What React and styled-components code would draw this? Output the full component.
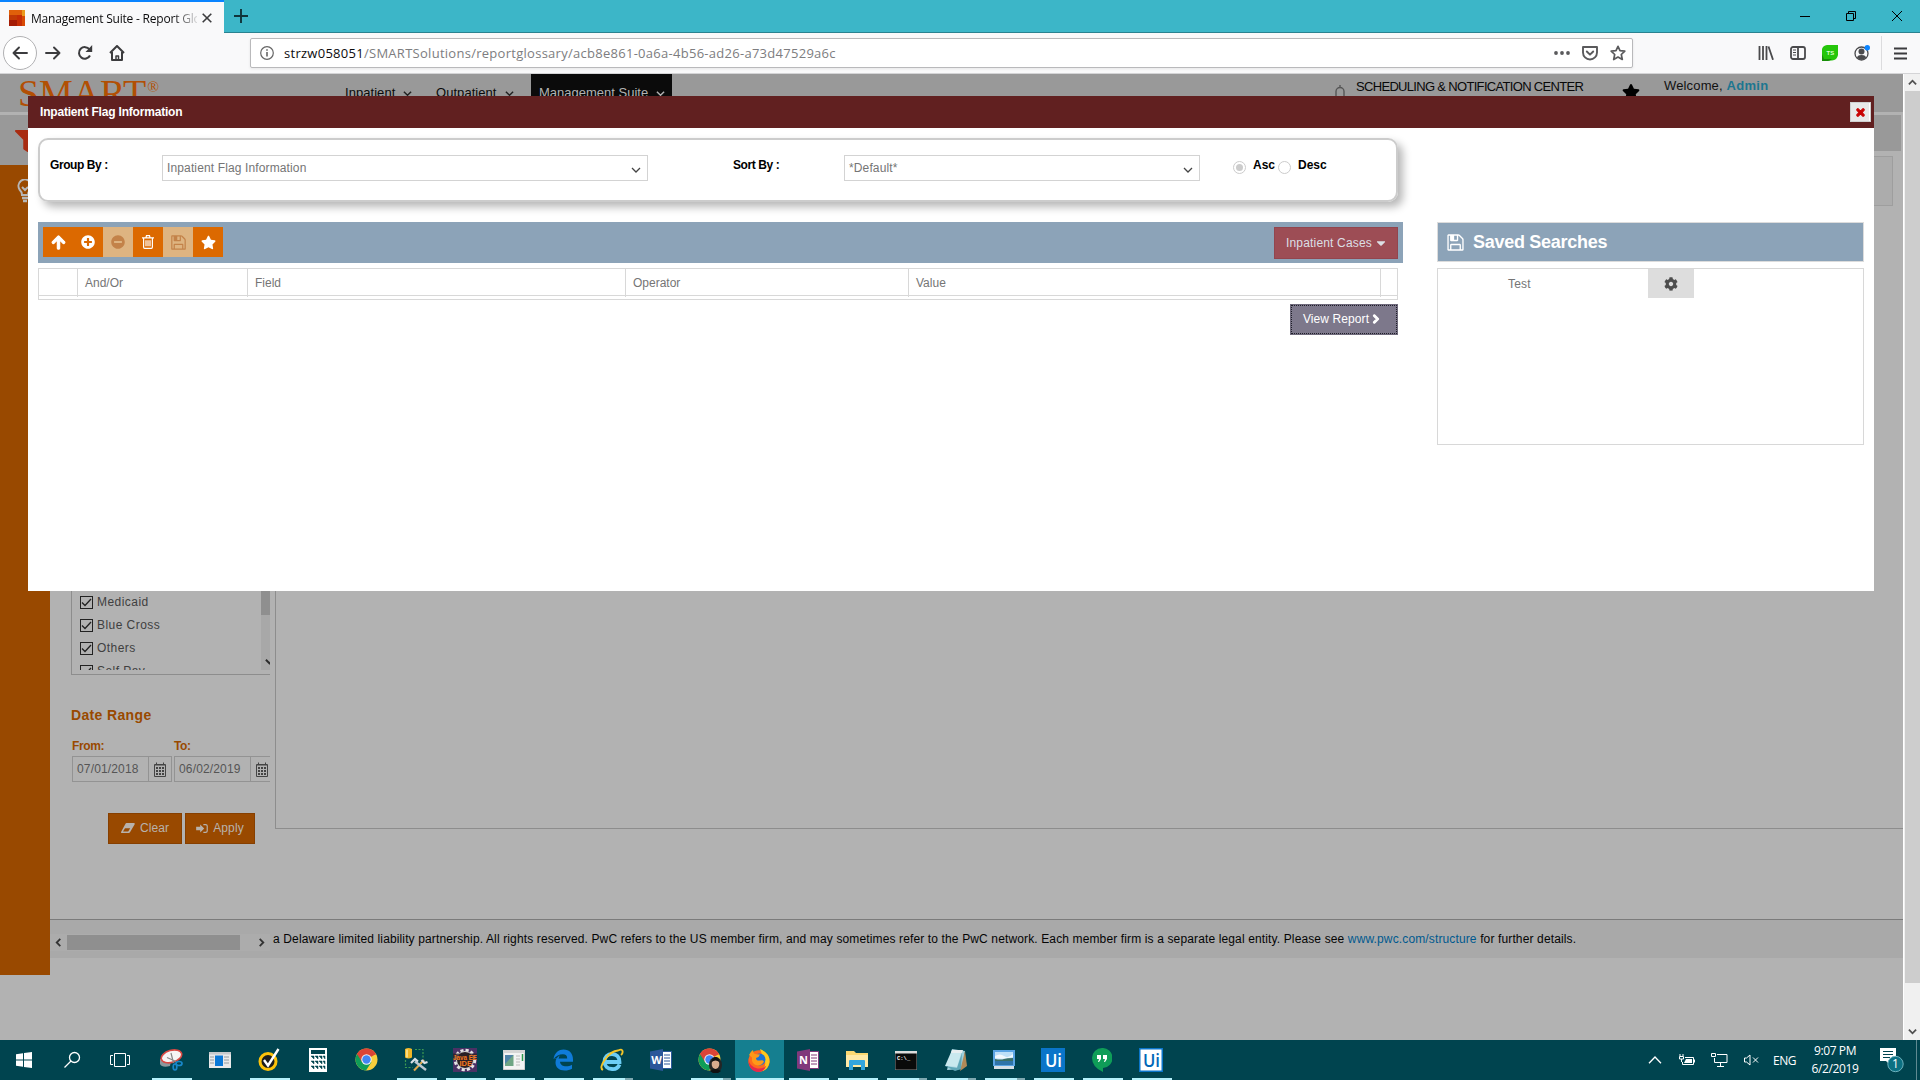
import React from "react";
import styled, { createGlobalStyle, css } from "styled-components";
import {
  FaArrowUp, FaPlusCircle, FaMinusCircle, FaStar, FaCog, FaChevronRight, FaFilter, FaTimes, FaCaretDown,
} from "react-icons/fa";

const ui = `"Open Sans", "Noto Sans", sans-serif`;
const arial = `"Liberation Sans", Arial, sans-serif`;

const Global = createGlobalStyle`
  *, *::before, *::after { box-sizing: border-box; }
  body { margin: 0; overflow: hidden; font-family: ${arial}; font-size: 12px; }
  svg { display: block; flex: none; }
`;

const Screen = styled.div`
  width: 1920px; height: 1080px; display: flex; flex-direction: column; overflow: hidden;
`;

/* ---------- browser chrome ---------- */
const TabBar = styled.div`
  height: 33px; flex: none; display: flex; background: #3cb6c8; border-bottom: 1px solid #2a8290;
`;
const Tab = styled.div`
  width: 224px; height: 33px; display: flex; align-items: center; background: #f9f9fa;
  border-top: 2px solid #0a84ff; padding: 1px 12px 0 9px; font-family: ${ui};
`;
const TabTitle = styled.div`
  width: 166px; margin: 0 5px 0 6px; overflow: hidden; white-space: nowrap; font-size: 12px; color: #0c0c0d;
  letter-spacing: -0.2px;
  mask-image: linear-gradient(to right, #000 142px, transparent 170px);
`;
const NewTab = styled.div`
  width: 34px; display: flex; align-items: center; justify-content: center;
`;
const Spacer = styled.div` flex: 1; `;
const WinButton = styled.div`
  width: 46px; display: flex; align-items: center; justify-content: center;
`;
const NavBar = styled.div`
  height: 41px; flex: none; display: flex; align-items: center; background: #f9f9fa;
  border-bottom: 1px solid #d4d4d6;
`;
const BackButton = styled.div`
  width: 34px; height: 34px; margin: 0 0 0 3px; border: 1px solid #b1b1b3; border-radius: 50%;
  background: #fff; display: flex; align-items: center; justify-content: center;
`;
const NavIcon = styled.div`
  width: 32px; display: flex; align-items: center; justify-content: center;
`;
const UrlBar = styled.div`
  width: 1383px; height: 30px; margin-left: 117px; background: #fff; border: 1px solid #b9b9bb;
  border-radius: 2px; box-shadow: 0 1px 3px rgba(0,0,0,.08); display: flex; align-items: center;
  padding: 0 0 0 9px;
`;
const Url = styled.div`
  flex: 1; margin-left: 10px; font-family: ${ui}; font-size: 13px; letter-spacing: 0.275px;
  color: #7d7d80; white-space: nowrap;
`;
const Host = styled.span` color: #0c0c0d; `;
const UrlIcon = styled.div` width: 28px; display: flex; justify-content: center; `;
const ToolIcons = styled.div`
  flex: 1; height: 40px; display: flex; align-items: center; padding-left: 117px;
`;
const MenuButton = styled.div`
  margin-left: 3px; height: 34px; border-left: 1px solid #dcdcde; width: 38px; display: flex;
  align-items: center; justify-content: center;
`;

/* ---------- page ---------- */
const Viewport = styled.div` height: 966px; flex: none; display: flex; `;
const Page = styled.div`
  position: relative; width: 1903px; height: 966px; overflow: hidden; background: #b2b2b2;
  display: flex; flex-direction: column;
`;
const Header = styled.div`
  height: 38px; flex: none; background: #999; display: flex; align-items: flex-start; padding-left: 18px;
`;
const Logo = styled.div`
  width: 319px; display: flex; margin-top: -2px; font-family: "Liberation Serif", serif; font-size: 38px;
  line-height: 42px; color: #b24f04; letter-spacing: -0.1px; white-space: nowrap;
`;
const LogoMark = styled.span` font-size: 15.5px; line-height: 20px; margin: 5px 0 0 1px; `;
const NavItem = styled.div`
  height: 38px; width: ${(p) => p.$w}px; padding: 10px 0 0 8px; display: flex; font-size: 13px; line-height: 18px;
  color: ${(p) => (p.$active ? "#b2b2b2" : "#0a0a0a")}; background: ${(p) => (p.$active ? "#0b0b0b" : "transparent")};
  letter-spacing: ${(p) => (p.$active ? 0 : 0.05)}px; white-space: nowrap;
  svg { margin: 5px 0 0 8px; }
`;
const Notice = styled.div`
  margin-left: 662px; width: 324px; display: flex; font-size: 13px; line-height: 18px; padding-top: 4px; color: #080808;
  white-space: nowrap; letter-spacing: -0.68px;
  svg { margin: 7px 10px 0 0; }
`;
const StarMark = styled.div` margin: 9px 0 0 -36px; width: 42px; color: #000; `;
const Welcome = styled.div`
  font-size: 13px; line-height: 18px; padding-top: 3px; color: #111; white-space: nowrap; letter-spacing: 0.15px;
  b { color: #1c7690; letter-spacing: 0.3px; }
`;
const Body = styled.div` display: flex; margin-top: 3px; flex: 1; `;
const Rail = styled.div` width: 50px; flex: none; `;
const RailTop = styled.div` height: 50px; background: #999; padding: 15px 0 0 15px; color: #a82c12; `;
const RailMain = styled.div`
  height: 810px; background: #994900; padding: 14px 0 0 17px;
`;
const Main = styled.div` flex: 1; display: flex; flex-direction: column; `;
const SubBar = styled.div` height: 36px; flex: none; margin-right: 2px; background: #999; `;
const SubBox = styled.div`
  height: 50px; flex: none; margin: 5px 10px 0 0; border: 1px solid #9e9e9e; background: #acacac;
`;
const Columns = styled.div` height: 713px; display: flex; `;
const Filters = styled.div` width: 220px; overflow: hidden; padding: 378px 0 0 21px; `;
const CheckList = styled.div`
  width: 220px; height: 91px; border: 1px solid #8d8d8d; border-top: 0; display: flex; padding-bottom: 4px;
`;
const CheckRows = styled.div` width: 189px; padding: 6px 0 0 8px; height: 86px; overflow: hidden; `;
const CheckRow = styled.div`
  height: 23px; display: flex; align-items: center; font-size: 12px; letter-spacing: 0.45px; color: #404040;
`;
const CheckBox = styled.div`
  width: 13px; height: 13px; margin: 1px 4px 0 0; border: 1px solid #222; display: flex; align-items: center; justify-content: center;
`;
const ListScroll = styled.div`
  width: 17px; height: 86px; background: #a8a8a8; display: flex; flex-direction: column;
  justify-content: space-between; align-items: center; padding-bottom: 4px;
`;
const ListThumb = styled.div` width: 17px; height: 31px; background: #8f8f8f; `;
const RangeTitle = styled.div`
  margin-top: 31px; font-size: 14px; font-weight: bold; line-height: 18px; color: #994900; letter-spacing: 0.35px;
`;
const DateRow = styled.div` display: flex; gap: 2px; margin: 14px 0 0 1px; width: 210px; `;
const DateField = styled.div` width: 100px; flex: none; `;
const DateLabel = styled.div`
  font-weight: bold; line-height: 16px; margin-bottom: 2px; color: #994900; letter-spacing: -0.35px;
`;
const DateInput = styled.div`
  height: 26px; border: 1px solid #939393; display: flex; align-items: center; padding-left: 4px;
  color: #555; letter-spacing: 0.15px;
`;
const DateText = styled.span` width: 71px; `;
const DateButton = styled.div`
  flex: 1; height: 24px; border-left: 1px solid #939393; display: flex; align-items: center; justify-content: center;
`;
const Actions = styled.div` display: flex; gap: 3px; margin: 31px 0 0 37px; `;
const Action = styled.div`
  width: ${(p) => p.$w}px; height: 31px; background: #994900; border: 1px solid #863f00; color: #b8b2ac;
  display: flex; align-items: center; justify-content: center; gap: 5px; letter-spacing: 0.1px; padding-bottom: 1px;
`;
const ContentPanel = styled.div`
  flex: 1; margin-left: 5px; height: 623px; border: 1px solid #8d8d8d; border-width: 0 0 1px 1px;
`;
const Footer = styled.div`
  height: 39px; flex: none; background: #a9a9a9; border-top: 1px solid #7b7b7b; display: flex; align-items: flex-start;
`;
const HScroll = styled.div`
  width: 220px; height: 17px; margin-top: 14px; background: #acacac; display: flex; align-items: center;
  justify-content: space-between; padding: 0 4px;
`;
const HThumb = styled.div` width: 173px; height: 15px; background: #8f8f8f; margin: 0 13px 0 0; `;
const Legal = styled.div`
  margin: 11px 0 0 3px; line-height: 16px; color: #050505; white-space: nowrap; letter-spacing: 0.132px;
`;
const Link = styled.span` color: #00598f; `;

const VScroll = styled.div`
  width: 17px; height: 966px; background: #f0f0f0; border-left: 1px solid #fff; display: flex;
  flex-direction: column; align-items: center;
`;
const VArrow = styled.div` height: 17px; display: flex; align-items: center; `;
const VThumb = styled.div` width: 15px; height: 892px; background: #cdcdcd; margin-bottom: 40px; `;

/* ---------- dialog ---------- */
const Dialog = styled.div`
  position: absolute; left: 28px; top: 22px; width: 1846px; height: 495px; background: #fff;
`;
const DialogHead = styled.div`
  height: 32px; background: #612020; color: #fff; font-weight: bold; display: flex; align-items: center;
  justify-content: space-between; padding: 0 3px 0 12px; letter-spacing: -0.19px;
`;
const Close = styled.div`
  width: 21px; height: 20px; background: #e8e8e8; border: 1px solid #cfcfcf; box-shadow: inset -1px 0 #fff;
  display: flex; align-items: center; justify-content: center; color: #c80000;
`;
const GroupBox = styled.div`
  width: 1360px; height: 64px; margin: 10px 0 0 10px; border: 2px solid #ccc; border-radius: 10px;
  box-shadow: 5px 5px 8px #b8b8b8; display: flex; align-items: flex-start; padding: 15px 0 0 10px;
`;
const Label = styled.div`
  width: ${(p) => p.$w}px; flex: none; font-weight: bold; line-height: 16px; margin-top: 2px; color: #000;
  letter-spacing: ${(p) => p.$ls || 0}px;
`;
const Select = styled.div`
  width: ${(p) => p.$w}px; height: 26px; margin-right: ${(p) => p.$mr}px; border: 1px solid #d3d3d3;
  display: flex; align-items: center; justify-content: space-between; padding: 0 6px 0 4px; color: #757575;
  letter-spacing: 0.13px;
  svg { margin-top: 3px; }
`;
const Radio = styled.div`
  width: 13px; height: 13px; margin: 6px 7px 0 0; flex: none; border: 1px solid #ccc; border-radius: 50%;
  display: flex; align-items: center; justify-content: center;
  &::after { content: ""; width: 7px; height: 7px; border-radius: 50%; background: ${(p) => (p.$on ? "#ccc" : "transparent")}; }
`;
const Row = styled.div` display: flex; gap: 34px; margin: 20px 0 0 10px; `;
const Left = styled.div` width: 1365px; `;
const Toolbar = styled.div`
  height: 41px; background: #8ca3b8; display: flex; padding: 5px; align-items: flex-start;
`;
const Tool = styled.div`
  width: 30px; height: 30px; background: ${(p) => (p.$off ? "#deb481" : "#dc6900")};
  color: ${(p) => (p.$off ? "#c38249" : "#fff")}; display: flex; align-items: center; justify-content: center;
`;
const Cases = styled.div`
  width: 124px; height: 32px; background: #9d4d55; border: 1px solid #92454e; color: #dcdfe4; display: flex;
  align-items: center; justify-content: center; gap: 2px; letter-spacing: 0.18px; padding-left: 2px;
`;
const Table = styled.div`
  width: 1360px; height: 32px; margin-top: 5px; border: 1px solid #d8d8d8;
`;
const HeadRow = styled.div`
  height: 27px; border-bottom: 1px solid #d8d8d8; display: grid;
  grid-template-columns: 39px 170px 378px 283px 472px 1fr;
`;
const HeadCell = styled.div`
  border-right: 1px solid #d8d8d8; padding: 1px 0 0 7px; line-height: 27px; color: #757575;
  &:last-child { border-right: 0; }
`;
const ViewReport = styled.div`
  width: 108px; height: 31px; margin: 4px 5px 0 auto; background: #7d788b; border: 1px solid #6f6a7c; color: #fff;
  display: flex; align-items: center; justify-content: center; gap: 2px; outline: 1px dotted #1e1e28; outline-offset: -2px;
  padding: 0 4px 2px 0; letter-spacing: 0.1px;
`;
const Saved = styled.div` width: 427px; `;
const SavedHead = styled.div`
  height: 40px; background: #8ca3b8; border: 1px solid #dcdcdc; display: flex; align-items: center; gap: 8px;
  padding-left: 8px; color: #fff; font-size: 18px; font-weight: bold; letter-spacing: -0.28px;
`;
const SavedList = styled.div` height: 177px; margin-top: 6px; border: 1px solid #d8d8d8; display: flex; `;
const SavedName = styled.div` width: 210px; padding-left: 70px; line-height: 30px; color: #757575; letter-spacing: 0.2px; `;
const Gear = styled.div`
  width: 46px; height: 29px; background: #ddd; color: #4d4d4d; display: flex; align-items: center; justify-content: center;
`;

/* ---------- task bar ---------- */
const TaskBar = styled.div`
  height: 40px; flex: none; background: #00444f; display: flex; align-items: stretch; color: #fff; font-family: ${ui};
`;
const TaskItem = styled.div`
  width: 49px; display: flex; align-items: center; justify-content: center; padding-right: 1px;
  ${(p) => p.$system && css` width: 48px; padding: 0; & + &:nth-child(3) { margin-right: 3px; } `}
  ${(p) => p.$run && css`
    background: linear-gradient(#b5f1fb, #b5f1fb) center bottom / ${p.$active ? 48 : 40}px 2px no-repeat
    ${p.$active ? ", #157f90" : ""};
  `}
  ${(p) => p.$many && css`
    background: linear-gradient(to right, #b5f1fb 32px, #7ea9b1 32px) center bottom / 40px 2px no-repeat;
  `}
`;
const Tray = styled.div` margin-left: auto; display: flex; align-items: center; `;
const TrayIcon = styled.div` width: 32px; display: flex; align-items: center; justify-content: center; `;
const Lang = styled.div` width: 35px; font-size: 12px; letter-spacing: -0.5px; margin-left: 6px; `;
const Clock = styled.div`
  width: 54px; text-align: center; font-size: 12px; line-height: 18px; letter-spacing: -0.4px; white-space: nowrap;
  margin-right: 17px;
`;
const Peek = styled.div` width: 4px; height: 40px; border-left: 1px solid #5f8a92; margin-left: 12px; `;

const Chevron = ({ w = 9, c = "#444", sw = 1.6, dir = "down" }) => {
  const r = { down: 0, up: 180, left: 90, right: -90 }[dir];
  return (
    <svg width={w} height={w} viewBox="0 0 10 10">
      <path d="M1 3l4 4 4-4" fill="none" stroke={c} strokeWidth={sw} transform={`rotate(${r} 5 5)`} />
    </svg>
  );
};

const Floppy = ({ size }) => (
  <svg width={size} height={size} viewBox="0 0 1792 1792" fill="currentColor">
    <path d="M512 1536h768v-384H512v384zm896 0h128V640q0-14-10-38.500t-20-34.500l-281-281q-10-10-34-20t-39-10v416q0 40-28 68t-68 28H480q-40 0-68-28t-28-68V256H256v1280h128v-416q0-40 28-68t68-28h832q40 0 68 28t28 68v416zM1024 608V288q0-13-9.500-22.500T992 256H800q-13 0-22.500 9.500T768 288v320q0 13 9.500 22.500T800 640h192q13 0 22.500-9.500t9.500-22.500zm640 32v928q0 40-28 68t-68 28H224q-40 0-68-28t-28-68V224q0-40 28-68t68-28h928q40 0 88 20t76 48l280 280q28 28 48 76t20 88z" />
  </svg>
);

const Trash = () => (
  <svg width="12" height="14" viewBox="0 0 12 14" fill="none" stroke="#fff" strokeWidth="1.200">
    <path d="M0 2.800h12M4 2.500L4.500.7h3L8 2.500M1.600 3v9q0 1.300 1 1.300h6.800q1 0 1-1.300V3M4 5.200v6M6 5.200v6M8 5.200v6" />
  </svg>
);

const Eraser = () => (
  <svg width="14" height="10" viewBox="0 0 14 10" fill="currentColor">
    <path fillRule="evenodd" d="M5.500 0H13q1 0 .7 1.200L9 9.200q-.5.8-1.200.8H.8Q-.3 10 .2 8.800L4.500.7Q4.900 0 5.500 0zM2 8.600h5.200l2-3.400H4z" />
  </svg>
);

const SignIn = () => (
  <svg width="12" height="9" viewBox="0 0 13 10" fill="currentColor">
    <path d="M9 5L4.500 9.500V7H0V3h4.500V.5z" />
    <path d="M8 .7h2.500q1.800 0 1.800 1.500v5.600q0 1.500-1.800 1.500H8" fill="none" stroke="currentColor" strokeWidth="1.300" />
  </svg>
);

const Calendar = () => (
  <svg width="12" height="15" viewBox="0 0 12 15" fill="none" stroke="#444">
    <path d="M.5 2.500h11v12H.5zM2.500.5v2M9.500.5v2M1 3h10" />
    <path d="M2 6h2M5 6h2M8 6h2M2 9h2M5 9h2M8 9h2M2 12h2M5 12h2M8 12h2" strokeWidth="2" />
  </svg>
);

const Chrome = ({ face }) => (
  <svg width="26" height="26" viewBox="0 0 26 26">
    <circle cx="12.500" cy="12.500" r="11" fill="#f9cf3c" />
    <path d="M12.500 12.500L3 7A11 11 0 0 1 22 7z" fill="#db4437" />
    <path d="M12.500 12.500L3 7a11 11 0 0 0 9 16.500L17.500 15z" fill="#0f9d58" />
    <path d="M12.500 7.500H22A11 11 0 0 0 3 7l5 8z" fill="#db4437" />
    <circle cx="12.500" cy="12.500" r="5.200" fill="#f4f4f4" />
    <circle cx="12.500" cy="12.500" r="4.200" fill="#4285f4" />
    {face && (
      <g>
        <ellipse cx="18.500" cy="18" rx="6.500" ry="8" fill="#252525" />
        <ellipse cx="18.500" cy="17" rx="3.800" ry="5" fill="#d9ab8e" />
        <path d="M14.500 15q1-5 4-5t4 5q-4-3-8 0z" fill="#111" />
        <path d="M13 24q5.500-4 11 0l-3 2h-5z" fill="#111" />
      </g>
    )}
  </svg>
);

const WinLogo = () => (
  <svg width="16" height="16" viewBox="0 0 16 16" fill="#fff">
    <path d="M0 2.200l7-1v6.300H0zM8 1l8-1v7.500H8zM0 8.500h7v6.300l-7-1zM8 8.500h8V16l-8-1z" />
  </svg>
);
const Search = () => (
  <svg width="18" height="18" viewBox="0 0 18 18" fill="none" stroke="#fff" strokeWidth="1.300">
    <circle cx="11.500" cy="6.500" r="5" /><path d="M8 10L1.500 16.500" />
  </svg>
);
const TaskView = () => (
  <svg width="20" height="16" viewBox="0 0 20 16" fill="none" stroke="#fff">
    <path d="M4.500 1.500h11v13h-11zM3 3.500H.5v9H3M17 3.500h2.500v9H17" />
  </svg>
);
const Snip = () => (
  <svg width="24" height="22" viewBox="0 0 24 22">
    <path d="M1 10v5q2 4 10 2l1-5z" fill="#8a979c" />
    <ellipse cx="12.500" cy="7.500" rx="10.500" ry="6" fill="#f5f5f5" stroke="#d84a44" strokeWidth="1.600" transform="rotate(-16 12 7.500)" />
    <path d="M12 4l2.500 10M8 8.500l9 4" stroke="#888" strokeWidth="1.200" />
    <g fill="none" stroke="#1887c9" strokeWidth="1.700"><ellipse cx="20" cy="14.500" rx="3" ry="2" /><ellipse cx="16" cy="18" rx="1.800" ry="3" /></g>
  </svg>
);
const NewsWin = () => (
  <svg width="22" height="16" viewBox="0 0 22 16">
    <path d="M0 0h22v16H0z" fill="#e9e9e9" /><path d="M0 0h22v2.500H0z" fill="#c5c9cc" />
    <path d="M6 3.500h8v10.500H6z" fill="#0a78d6" />
    <path d="M1 5h4M1 8h4M1 11h4M15 5h5M15 8h5M15 11h5" stroke="#929ba0" />
  </svg>
);
const Norton = () => (
  <svg width="22" height="24" viewBox="0 0 22 24" fill="none">
    <circle cx="10" cy="13.500" r="8" fill="#1d1d1d" stroke="#fdc20a" strokeWidth="3" />
    <path d="M6 12l4 5.500L20.500 1" stroke="#fff" strokeWidth="2.400" />
  </svg>
);
const Calc = () => (
  <svg width="18" height="24" viewBox="0 0 18 24">
    <path d="M0 0h18v24H0z" fill="#fff" /><path d="M2 2h14v4H2z" fill="#00444f" />
    <path d="M2 8h3v3zM6 8h3v3zM10 8h3v3zM14 8h2v3zM2 13h3v3zM6 13h3v3zM10 13h3v3zM14 13h2v3zM2 18h3v3zM6 18h3v3zM10 18h3v3zM14 18h2v3z" fill="#00444f" stroke="#00444f" strokeWidth=".5" />
  </svg>
);
const DbTools = () => (
  <svg width="24" height="24" viewBox="0 0 24 24" fill="none">
    <path d="M11 1.500h8v8M1.500 12v7.500h7" stroke="#3d9a52" strokeWidth="1.200" strokeDasharray="2 1.500" />
    <path d="M1 1q3.500-2 7 0v8.500q-3.500 2-7 0z" fill="#f0b627" /><path d="M3 1.500v8" stroke="#ffe9a2" strokeWidth="1.500" />
    <path d="M20 12L10 22.500" stroke="#dfa94c" strokeWidth="2" /><path d="M11 13.500L22 22" stroke="#bcc8d2" strokeWidth="2.400" />
    <path d="M7 15l4-4 3 2.500M17.500 12l3 3 3-1" stroke="#d9e1e7" strokeWidth="2.200" />
  </svg>
);
const JavaText = styled.text` font: bold 7.5px ${arial}; fill: #f47a20; `;
const JavaIde = () => (
  <svg width="24" height="24" viewBox="0 0 24 24">
    <path d="M0 0h24v24H0z" fill="#4a3165" />
    <circle cx="12" cy="12" r="9.500" fill="none" stroke="#e5e5e5" strokeWidth="3.500" strokeDasharray="3 2" />
    <circle cx="12" cy="12" r="8.500" fill="#2a2025" stroke="#d7d7d7" />
    <path d="M0 5.500h24v6.500H0z" fill="#2a2025" opacity=".75" />
    <JavaText x="0" y="11.500" textLength="24" lengthAdjust="spacingAndGlyphs">Java EE</JavaText>
    <JavaText x="6.500" y="18">IDE</JavaText>
  </svg>
);
const ServerWin = () => (
  <svg width="22" height="20" viewBox="0 0 22 20">
    <path d="M0 0h22v20H0z" fill="#f3f3f3" stroke="#aaa" /><path d="M0 0h22v3H0z" fill="#d6d6d6" />
    <path d="M2 5h8.500v11H2z" fill="#6fa584" /><path d="M2 5h8.500L2 14z" fill="#4f83a8" />
    <path d="M13 6h4M13 9h4M13 12h4M13 15h4" stroke="#bbb" /><path d="M19.500 4v7" stroke="#2e9a4c" strokeWidth="1.500" />
  </svg>
);
const Edge = () => (
  <svg width="21" height="22" viewBox="0 0 21 22">
    <path d="M.5 10C1.500 3.500 6 .5 10.500.5c6 0 9.500 4 9.500 10v2.300H7c.3 3.300 3 4.500 6 4.500 2.300 0 4.300-.6 6-1.600v4c-2 1.200-4.500 1.800-7.300 1.800C6 21.500 2.500 18.300 2.500 13.500c0-3 1.500-5.600 4.500-7.200-.8 1-1.200 2.200-1.300 3.300M6.900 9.600h7.300c0-3-1.400-4.300-4.200-4.300C6.500 5.200 3 6.800.5 10" fill="#0f7bd8" fillRule="evenodd" />
  </svg>
);
const IE = () => (
  <svg width="24" height="24" viewBox="0 0 24 24" fill="none">
    <path d="M19.500 16.500A7.300 7.300 0 0 1 12 21c-4.500 0-7.500-3-7.500-7.500S7.500 6 12 6s7.500 3 7.500 8H6" stroke="#6ccdf5" strokeWidth="3.800" />
    <path d="M3 22Q-1 20 5 11.500T18 2.500q4-2 4.500.5T21 7" stroke="#f5c628" strokeWidth="1.900" />
  </svg>
);
const OfficeText = styled.text` font: bold 11px ${ui}; fill: #fff; text-anchor: middle; `;
const Office = ({ letter, c }) => (
  <svg width="22" height="22" viewBox="0 0 22 22">
    <path d="M12 2.500h9.500v17H12z" fill="#fff" stroke={c} />
    <path d="M14 6h6M14 9h6M14 12h6M14 15h6" stroke={c} />
    <path d="M0 2.500L13 0v22L0 19.500z" fill={c} /><OfficeText x="6.500" y="15">{letter}</OfficeText>
  </svg>
);
const Firefox = () => (
  <svg width="24" height="24" viewBox="0 0 24 24">
    <circle cx="12" cy="13" r="10.700" fill="#ff6a1c" />
    <path d="M13 1q10 4 9.500 13-1 7-7 9 5-7 1-13l-2-5z" fill="#ffc81d" />
    <circle cx="12.500" cy="11.500" r="6" fill="#1972d6" />
    <path d="M2 7q2-4 4-5 0 3 2 4l5 .5q-1 3-4 3.500 0 3 4 2.500 3-1 4 1-2 4-6 4-7-1-6-8z" fill="#ff9818" />
    <path d="M1.500 11q1 8 9 9.500 6 .5 9-3-2 6-8 6.500-10-.5-10-13z" fill="#e6284d" />
  </svg>
);
const Folder = () => (
  <svg width="22" height="22" viewBox="0 0 22 22">
    <path d="M0 2h8l2 2h12v14H0z" fill="#fbd972" /><path d="M0 6h22v12H0z" fill="#ffeaa6" />
    <path d="M3 12q0-1 1-1h14q1 0 1 1v9h-4v-5H7v5H3z" fill="#32a5de" />
  </svg>
);
const ConsoleText = styled.text` font: bold 5.5px "Liberation Mono", monospace; fill: #fff; `;
const Console = () => (
  <svg width="22" height="19" viewBox="0 0 22 19">
    <path d="M0 0h22v19H0z" fill="#0a0a0a" stroke="#888" /><path d="M0 0h22v2.500H0z" fill="#dcdcdc" />
    <ConsoleText x="2" y="8.500">C:\_</ConsoleText>
  </svg>
);
const Notepad = () => (
  <svg width="23" height="22" viewBox="0 0 23 22">
    <path d="M8 0l13 2-2 18-16 1z" fill="#9fd0dc" /><path d="M8 1l10 1-5 16-12-1z" fill="#c9e8ee" />
    <path d="M21 2l2 15-7 5z" fill="#b08a58" /><path d="M8 1h11l-1 3H7z" fill="#e7eef0" /><path d="M1 17l12 2 5-15-1 16-6 2z" fill="#60a7b8" />
  </svg>
);
const Photo = () => (
  <svg width="22" height="20" viewBox="0 0 22 20">
    <path d="M0 0h22v16H0z" fill="#5aa4e4" /><path d="M2 2h18v8H2z" fill="#bfe0f8" />
    <path d="M2 6q5-3 9 0t9-2v3q-9 3-18 1z" fill="#f2f8fc" />
    <path d="M2 9q6 1 9 0t9-1v4H2z" fill="#3b6f66" /><path d="M2 11h18v4H2z" fill="#2f74a8" />
    <path d="M1 16h20v3H1z" fill="#d5dfe5" />
  </svg>
);
const UiText = styled.text` font: 600 18px ${ui}; fill: ${(p) => (p.$inv ? "#0067b8" : "#fff")}; `;
const UiPath = ({ inv }) => (
  <svg width="24" height="24" viewBox="0 0 24 24">
    <path d="M.75.75h22.500v22.500H.75z" fill={inv ? "#fff" : "#0a75c9"} stroke="#0a75c9" strokeWidth="1.500" />
    <UiText $inv={inv} x="4" y="18.500" textLength="17" lengthAdjust="spacingAndGlyphs">Ui</UiText>
  </svg>
);
const Hangouts = () => (
  <svg width="20" height="24" viewBox="0 0 20 24">
    <path d="M10 0a10 10 0 1 1 1 20v4Q0 19 0 10A10 10 0 0 1 10 0z" fill="#0f9d58" />
    <path d="M5 7h4v4l-2 3H6l1-3H5zM11 7h4v4l-2 3h-1l1-3h-2z" fill="#fff" />
  </svg>
);

const tasks = [
  { icon: <WinLogo />, system: true }, { icon: <Search />, system: true }, { icon: <TaskView />, system: true },
  { icon: <Snip />, run: true }, { icon: <NewsWin /> }, { icon: <Norton />, run: true }, { icon: <Calc /> },
  { icon: <Chrome /> }, { icon: <DbTools />, run: true }, { icon: <JavaIde />, run: true },
  { icon: <ServerWin />, run: true }, { icon: <Edge />, run: true }, { icon: <IE />, many: true },
  { icon: <Office letter="W" c="#2b579a" /> }, { icon: <Chrome face />, many: true },
  { icon: <Firefox />, run: true, active: true }, { icon: <Office letter="N" c="#80397b" />, run: true },
  { icon: <Folder />, run: true }, { icon: <Console />, many: true }, { icon: <Notepad />, many: true },
  { icon: <Photo />, many: true }, { icon: <UiPath />, run: true }, { icon: <Hangouts />, run: true },
  { icon: <UiPath inv />, run: true },
];

const tools = [
  { icon: <FaArrowUp size={15} stroke="#fff" strokeWidth={40} /> }, { icon: <FaPlusCircle size={14} /> },
  { icon: <FaMinusCircle size={14} />, off: true },
  { icon: <Trash /> }, { icon: <Floppy size={17} />, off: true }, { icon: <FaStar size={15} /> },
];

const ExtText = styled.text` font: bold 6px ${arial}; fill: #d9ffd0; `;
const BadgeText = styled.text` font: 12px ${ui}; fill: #fff; text-anchor: middle; `;

function BrowserChrome() {
  return (
    <>
      <TabBar>
        <Tab>
          <svg width="16" height="16" viewBox="0 0 16 16">
            <path d="M0 0h16v16H0z" fill="#d84a05" /><path d="M13 0h3v6h-3z" fill="#eb9a1c" />
            <path d="M0 0h13v5H0z" fill="#e0600a" /><path d="M0 5h8v5H0z" fill="#c23a05" /><path d="M0 10h8v6H0z" fill="#a51c05" /><path d="M8 5h5v11H8z" fill="#c52d05" />
          </svg>
          <TabTitle>Management Suite - Report Glossary</TabTitle>
          <svg width="10" height="10" viewBox="0 0 10 10" stroke="#3c3c3e" strokeWidth="1.600"><path d="M.7.7l8.600 8.600M9.300.7L.7 9.300" /></svg>
        </Tab>
        <NewTab>
          <svg width="14" height="14" viewBox="0 0 14 14" stroke="#10343a" strokeWidth="1.900"><path d="M7 0v14M0 7h14" /></svg>
        </NewTab>
        <Spacer />
        <WinButton><svg width="10" height="10" stroke="#000"><path d="M0 5.500h10" /></svg></WinButton>
        <WinButton>
          <svg width="10" height="10" fill="none" stroke="#000"><path d="M.5 2.500h7v7h-7zM2.500 2.500v-2h7v7h-2" /></svg>
        </WinButton>
        <WinButton><svg width="10" height="10" stroke="#000"><path d="M0 0l10 10M10 0L0 10" /></svg></WinButton>
      </TabBar>
      <NavBar>
        <BackButton>
          <svg width="16" height="14" viewBox="0 0 16 14" fill="none" stroke="#3c3c3e" strokeWidth="1.900" strokeLinecap="round" strokeLinejoin="round"><path d="M15 7H1.500M7 1.500L1.500 7 7 12.500" /></svg>
        </BackButton>
        <NavIcon>
          <svg width="16" height="14" viewBox="0 0 16 14" fill="none" stroke="#3c3c3e" strokeWidth="1.900" strokeLinecap="round" strokeLinejoin="round"><path d="M1 7h13.500M9 1.500L14.500 7 9 12.500" /></svg>
        </NavIcon>
        <NavIcon>
          <svg width="16" height="16" viewBox="0 0 16 16" fill="none" stroke="#3c3c3e" strokeWidth="2"><path d="M13 10.500A5.800 5.800 0 1 1 12.500 4.500" /><path d="M15.200 0v7H8.500z" fill="#3c3c3e" stroke="none" /></svg>
        </NavIcon>
        <NavIcon>
          <svg width="16" height="16" viewBox="0 0 16 16" fill="none" stroke="#3c3c3e" strokeWidth="2" strokeLinejoin="round"><path d="M1 8l7-7 7 7M3 7v8h10V7" /><path d="M7 15v-4h2.500v4" strokeWidth="1.500" /></svg>
        </NavIcon>
        <UrlBar>
          <svg width="14" height="14" viewBox="0 0 14 14" fill="none" stroke="#666"><circle cx="7" cy="7" r="6.300" strokeWidth="1.200" /><path d="M7 6v4.500M7 3.300v1.500" strokeWidth="1.600" /></svg>
          <Url><Host>strzw058051</Host>/SMARTSolutions/reportglossary/acb8e861-0a6a-4b56-ad26-a73d47529a6c</Url>
          <UrlIcon><svg width="16" height="4" fill="#5a5a5c"><circle cx="2" cy="2" r="1.900" /><circle cx="8" cy="2" r="1.900" /><circle cx="14" cy="2" r="1.900" /></svg></UrlIcon>
          <UrlIcon>
            <svg width="16" height="15" viewBox="0 0 16 15" fill="none" stroke="#5a5a5c" strokeWidth="1.900" strokeLinecap="round" strokeLinejoin="round"><path d="M1 1h14v5.500a7 7 0 0 1-14 0zM4.800 5.500L8 8.700l3.200-3.200" /></svg>
          </UrlIcon>
          <UrlIcon>
            <svg width="16" height="16" viewBox="0 0 16 16" fill="none" stroke="#5a5a5c" strokeWidth="1.700" strokeLinejoin="round"><path d="M8 1.300l2 4.400 4.800.5-3.500 3.300 1 5L8 12l-4.300 2.500 1-5L1.200 6.200 6 5.700z" /></svg>
          </UrlIcon>
        </UrlBar>
        <ToolIcons>
          <NavIcon><svg width="16" height="14" viewBox="0 0 16 14" stroke="#4a4a4c" strokeWidth="1.800"><path d="M1.500 0v14M5 0v14M8.500 0v14M10.500.5L15 13.800" /></svg></NavIcon>
          <NavIcon><svg width="16" height="14" viewBox="0 0 16 14" fill="none" stroke="#4a4a4c" strokeWidth="1.800"><rect x="1" y="1" width="14" height="12" rx="2" /><path d="M8 1v12" /><path d="M3 4h3M3 6.500h3M3 9h3" strokeWidth="1" /></svg></NavIcon>
          <NavIcon>
            <svg width="16" height="16" viewBox="0 0 16 16"><path d="M5 0h11v10q-1 5-6 5.500H0V4q1-3.500 5-4z" fill="#26c60b" /><path d="M0 16V9l2 5h8q-2 2-4 2z" fill="#188f08" /><ExtText x="4.500" y="10">TS</ExtText></svg>
          </NavIcon>
          <NavIcon>
            <svg width="16" height="16" viewBox="0 0 16 16"><circle cx="7.500" cy="8.500" r="6.500" fill="none" stroke="#4a4a4c" strokeWidth="1.300" /><circle cx="7.500" cy="6.500" r="3" fill="#4a4a4c" /><path d="M3 13q0-3 4.500-3t4.500 3q-4.500 3.500-9 0z" fill="#4a4a4c" /><circle cx="13.300" cy="2.700" r="2.700" fill="#0a84ff" /></svg>
          </NavIcon>
          <MenuButton><svg width="13" height="13" stroke="#3c3c3e" strokeWidth="2"><path d="M0 1.500h13M0 6.500h13M0 11.500h13" /></svg></MenuButton>
        </ToolIcons>
      </NavBar>
    </>
  );
}

function FlagDialog() {
  return (
    <Dialog>
      <DialogHead>Inpatient Flag Information<Close><FaTimes size={11} stroke="#c80000" strokeWidth={50} /></Close></DialogHead>
      <GroupBox>
        <Label $w={112} $ls={-0.42}>Group By :</Label>
        <Select $w={486} $mr={85}>Inpatient Flag Information<Chevron w={10} sw={1.3} /></Select>
        <Label $w={111} $ls={-0.42}>Sort By :</Label>
        <Select $w={356} $mr={33}>*Default*<Chevron w={10} sw={1.3} /></Select>
        <Radio $on /><Label $w={25}>Asc</Label>
        <Radio /><Label $w={40}>Desc</Label>
      </GroupBox>
      <Row>
        <Left>
          <Toolbar>
            {tools.map((t, i) => <Tool key={i} $off={t.off}>{t.icon}</Tool>)}
            <Spacer />
            <Cases>Inpatient Cases<FaCaretDown size={14} /></Cases>
          </Toolbar>
          <Table>
            <HeadRow>
              {["", "And/Or", "Field", "Operator", "Value", ""].map((h, i) => <HeadCell key={i}>{h}</HeadCell>)}
            </HeadRow>
          </Table>
          <ViewReport>View Report<FaChevronRight size={10} stroke="#fff" strokeWidth={60} /></ViewReport>
        </Left>
        <Saved>
          <SavedHead><Floppy size={19} />Saved Searches</SavedHead>
          <SavedList><SavedName>Test</SavedName><Gear><FaCog size={14} /></Gear></SavedList>
        </Saved>
      </Row>
    </Dialog>
  );
}

function SitePage() {
  return (
    <Page>
      <Header>
        <Logo>SMART<LogoMark>®</LogoMark></Logo>
        <NavItem $w={91}>Inpatient<Chevron c="#222" /></NavItem>
        <NavItem $w={103}>Outpatient<Chevron c="#222" /></NavItem>
        <NavItem $w={141} $active>Management Suite<Chevron c="#b2b2b2" /></NavItem>
        <Notice>
          <svg width="12" height="14" viewBox="0 0 12 14" fill="none" stroke="#555" strokeWidth="1.400"><path d="M6 0v2M2 13V6.500a4 4 0 0 1 8 0V13M0 13h12" /></svg>
          <span>SCHEDULING &amp; NOTIFICATION CENTER</span>
        </Notice>
        <StarMark><FaStar size={18} /></StarMark>
        <Welcome>Welcome, <b>Admin</b></Welcome>
      </Header>
      <Body>
        <Rail>
          <RailTop><FaFilter size={22} /></RailTop>
          <RailMain>
            <svg width="16" height="24" viewBox="0 0 16 24" fill="none" stroke="#b7b7b7" strokeWidth="2"><path d="M5 16q0-3-2.500-5.500a6.500 6.500 0 1 1 11 0Q11 13 11 16zM5 8l3 3 3-3" /><path d="M5 19h6M6 22h4" strokeWidth="2.500" /></svg>
          </RailMain>
        </Rail>
        <Main>
          <SubBar />
          <SubBox />
          <Columns>
            <Filters>
              <CheckList>
                <CheckRows>
                  {["Medicaid", "Blue Cross", "Others", "Self Pay"].map((n) => (
                    <CheckRow key={n}>
                      <CheckBox><svg width="11" height="9" viewBox="0 0 11 9" fill="none" stroke="#222" strokeWidth="1.300"><path d="M1 4.500l3 3L10 1" /></svg></CheckBox>{n}
                    </CheckRow>
                  ))}
                </CheckRows>
                <ListScroll><ListThumb /><Chevron c="#2b2b2b" sw={2.2} /></ListScroll>
              </CheckList>
              <RangeTitle>Date Range</RangeTitle>
              <DateRow>
                {[["From:", "07/01/2018"], ["To:", "06/02/2019"]].map(([l, v]) => (
                  <DateField key={l}>
                    <DateLabel>{l}</DateLabel>
                    <DateInput><DateText>{v}</DateText><DateButton><Calendar /></DateButton></DateInput>
                  </DateField>
                ))}
              </DateRow>
              <Actions>
                <Action $w={74}><Eraser />Clear</Action>
                <Action $w={70}><SignIn />Apply</Action>
              </Actions>
            </Filters>
            <ContentPanel />
          </Columns>
          <Footer>
            <HScroll><Chevron dir="left" c="#333" sw={2} /><HThumb /><Chevron dir="right" c="#333" sw={2} /></HScroll>
            <Legal>
              a Delaware limited liability partnership. All rights reserved. PwC refers to the US member firm, and may sometimes refer to the PwC network. Each member firm is a separate legal entity. Please see <Link>www.pwc.com/structure</Link> for further details.
            </Legal>
          </Footer>
        </Main>
      </Body>
      <FlagDialog />
    </Page>
  );
}

export default function App() {
  return (
    <Screen>
      <Global />
      <BrowserChrome />
      <Viewport>
        <SitePage />
        <VScroll>
          <VArrow><Chevron dir="up" c="#505050" sw={2} /></VArrow>
          <VThumb />
          <VArrow><Chevron c="#505050" sw={2} /></VArrow>
        </VScroll>
      </Viewport>
      <TaskBar>
        {tasks.map((t, i) => (
          <TaskItem key={i} $run={t.run} $many={t.many} $active={t.active} $system={t.system}>{t.icon}</TaskItem>
        ))}
        <Tray>
          <TrayIcon><svg width="14" height="8" viewBox="0 0 14 8" fill="none" stroke="#fff" strokeWidth="1.300"><path d="M1 7.300L7 1l6 6.300" /></svg></TrayIcon>
          <TrayIcon>
            <svg width="17" height="12" viewBox="0 0 17 12" fill="none" stroke="#fff"><path d="M6 3.500h8.500v7h-11V8M15.500 5.500v3" /><path d="M7 5h6v4H5z" fill="#fff" stroke="none" /><path d="M1 0v2M4 0v2M.5 2.500h4V5h-4zM2.500 5v3" /></svg>
          </TrayIcon>
          <TrayIcon>
            <svg width="17" height="14" viewBox="0 0 17 14" fill="none" stroke="#fff"><path d="M6 1.500h10v8H3.500V5M.5.5h4v3h-4zM9.500 10v3M6 13.500h7" /></svg>
          </TrayIcon>
          <TrayIcon>
            <svg width="15" height="12" viewBox="0 0 15 12" fill="none" stroke="#fff"><path d="M.5 4v4h2L6 11V1L2.500 4zM9 3.500l5 5M14 3.500l-5 5" /></svg>
          </TrayIcon>
          <Lang>ENG</Lang>
          <Clock>9:07 PM<br />6/2/2019</Clock>
          <svg width="25" height="26" viewBox="0 0 25 26"><path d="M1 1h16v13h-6v4l-4-4H1z" fill="#fff" /><path d="M4 4.500h10M4 7.500h10M4 10.500h7" stroke="#00444f" /><circle cx="16.500" cy="17" r="7.700" fill="#0b7082" stroke="#6db1bd" /><BadgeText x="16.500" y="21">1</BadgeText></svg>
          <Peek />
        </Tray>
      </TaskBar>
    </Screen>
  );
}
